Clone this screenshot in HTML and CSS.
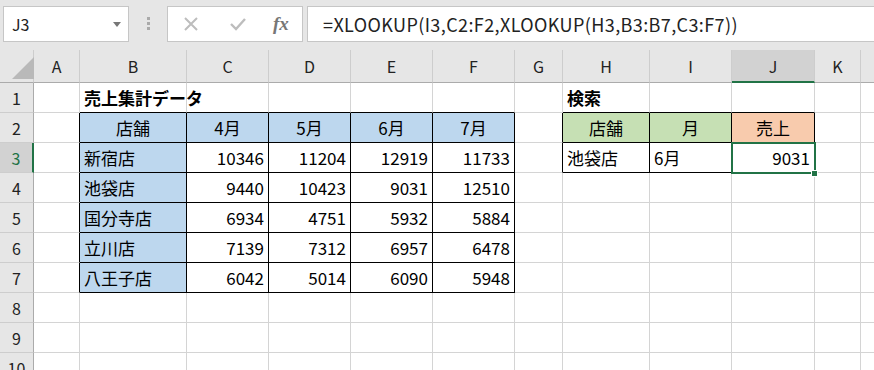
FILE: index.html
```html
<!DOCTYPE html>
<html>
<head>
 <meta charset="utf-8"/>
 <title>XLOOKUP</title>
<link rel="stylesheet" href="styles.css">
</head>
<body>

<!-- formula bar -->
<div class="bar">
 <div class="namebox">J3<span class="drop"></span></div>
 <div class="dots"><i></i><i></i><i></i></div>
 <div class="btns">
  <svg class="ico" width="16" height="16" viewBox="0 0 16 16"><path d="M2 2 L14 14 M14 2 L2 14" stroke="#bdbdbd" stroke-width="2" fill="none"/></svg>
  <svg class="ico" width="18" height="16" viewBox="0 0 18 16"><path d="M2 8 L7 13 L16 3" stroke="#bdbdbd" stroke-width="2.4" fill="none"/></svg>
  <span class="fx">fx</span>
 </div>
 <div class="formula">=XLOOKUP(I3,C2:F2,XLOOKUP(H3,B3:B7,C3:F7))</div>
</div>

<!-- sheet -->
<table class="sheet">
<colgroup>
 <col class="c-rh"><col class="c-a"><col class="c-b"><col class="c-m"><col class="c-m"><col class="c-m"><col class="c-m">
 <col class="c-g"><col class="c-h"><col class="c-m"><col class="c-j"><col class="c-k"><col class="c-l">
</colgroup>
<tr class="hdr">
 <th class="corner"><svg width="24" height="24" viewBox="0 0 24 24"><polygon points="23,1 23,23 1,23" fill="#b9b9b9"/></svg></th>
 <th>A</th><th>B</th><th>C</th><th>D</th><th>E</th><th>F</th><th>G</th><th>H</th><th>I</th><th class="sel">J</th><th>K</th><th></th>
</tr>
<tr>
 <th class="rh">1</th><td></td>
 <td class="bt title">売上集計データ</td><td class="bt"></td><td class="bt"></td><td class="bt"></td><td class="bt"></td>
 <td></td>
 <td class="bt title">検索</td><td class="bt"></td><td class="bt"></td><td></td><td></td>
</tr>
<tr>
 <th class="rh">2</th><td class="bl"></td>
 <td class="b blue ctr">店舗</td><td class="b blue ctr">4月</td><td class="b blue ctr">5月</td><td class="b blue ctr">6月</td><td class="b blue ctr">7月</td>
 <td class="bl"></td>
 <td class="b green ctr">店舗</td><td class="b green ctr">月</td><td class="b orange ctr">売上</td><td></td><td></td>
</tr>
<tr>
 <th class="rh on">3</th><td class="bl"></td>
 <td class="b blue">新宿店</td><td class="b num">10346</td><td class="b num">11204</td><td class="b num">12919</td><td class="b num">11733</td>
 <td class="bl"></td>
 <td class="b">池袋店</td><td class="b">6月</td><td class="b num cur">9031</td><td></td><td></td>
</tr>
<tr>
 <th class="rh">4</th><td class="bl"></td>
 <td class="b blue">池袋店</td><td class="b num">9440</td><td class="b num">10423</td><td class="b num">9031</td><td class="b num">12510</td>
 <td></td><td></td><td></td><td></td><td></td><td></td>
</tr>
<tr>
 <th class="rh">5</th><td class="bl"></td>
 <td class="b blue">国分寺店</td><td class="b num">6934</td><td class="b num">4751</td><td class="b num">5932</td><td class="b num">5884</td>
 <td></td><td></td><td></td><td></td><td></td><td></td>
</tr>
<tr>
 <th class="rh">6</th><td class="bl"></td>
 <td class="b blue">立川店</td><td class="b num">7139</td><td class="b num">7312</td><td class="b num">6957</td><td class="b num">6478</td>
 <td></td><td></td><td></td><td></td><td></td><td></td>
</tr>
<tr>
 <th class="rh">7</th><td class="bl"></td>
 <td class="b blue">八王子店</td><td class="b num">6042</td><td class="b num">5014</td><td class="b num">6090</td><td class="b num">5948</td>
 <td></td><td></td><td></td><td></td><td></td><td></td>
</tr>
<tr><th class="rh">8</th><td></td><td></td><td></td><td></td><td></td><td></td><td></td><td></td><td></td><td></td><td></td><td></td></tr>
<tr><th class="rh">9</th><td></td><td></td><td></td><td></td><td></td><td></td><td></td><td></td><td></td><td></td><td></td><td></td></tr>
<tr><th class="rh">10</th><td></td><td></td><td></td><td></td><td></td><td></td><td></td><td></td><td></td><td></td><td></td><td></td></tr>
</table>

</body>
</html>
```

FILE: styles.css
```css
body {
 margin: 0;
 overflow: hidden;
 background: #e6e6e6;
 font-family: "Noto Sans CJK JP", sans-serif;
 color: #000;
}

/* formula bar */
.bar {
 display: flex;
 align-items: flex-start;
 height: 50px;
 padding: 6px 0 0 3px;
 box-sizing: border-box;
}
.namebox {
 position: relative;
 width: 126px;
 height: 36px;
 box-sizing: border-box;
 background: #fff;
 border: 1px solid #c6c6c6;
 padding-left: 8px;
 font-size: 16px;
 line-height: 34px;
 color: #222;
}
.drop {
 position: absolute;
 right: 7px;
 top: 15px;
 border-left: 4px solid transparent;
 border-right: 4px solid transparent;
 border-top: 5px solid #777;
}
.dots {
 width: 38px;
 display: flex;
 flex-direction: column;
 align-items: center;
 gap: 2px;
 padding-top: 11px;
}
.dots i {
 width: 3px;
 height: 3px;
 background: #aaa;
}
.btns {
 width: 136px;
 height: 36px;
 box-sizing: border-box;
 background: #fff;
 border: 1px solid #c6c6c6;
 display: flex;
 align-items: center;
 padding-left: 15px;
 gap: 30px;
}
.fx {
 font-family: "Liberation Serif", serif;
 font-style: italic;
 font-weight: bold;
 font-size: 19px;
 color: #777;
 margin-left: -4px;
}
.formula {
 flex: 1;
 height: 36px;
 box-sizing: border-box;
 margin-left: 4px;
 margin-right: -10px;
 background: #fff;
 border: 1px solid #c6c6c6;
 padding-left: 15px;
 font-size: 18px;
 letter-spacing: 0.4px;
 line-height: 34px;
 color: #222;
 white-space: nowrap;
}

/* sheet */
.sheet {
 table-layout: fixed;
 border-collapse: separate;
 border-spacing: 0;
 width: 921px;
 background: #fff;
}
.c-rh { width: 34px; }
.c-a { width: 46px; }
.c-b { width: 107px; }
.c-m { width: 82px; }
.c-g { width: 48px; }
.c-h { width: 87px; }
.c-j { width: 83px; }
.c-k { width: 46px; }
.c-l { width: 60px; }

.sheet th, .sheet td {
 box-sizing: border-box;
 padding: 0 4px;
 border-right: 1px solid #d4d4d4;
 border-bottom: 1px solid #d4d4d4;
 font-size: 17px;
 font-weight: normal;
 white-space: nowrap;
 overflow: visible;
 height: 30px;
 line-height: 28px;
}
.hdr th {
 height: 33px;
 background: #e6e6e6;
 border-right: 1px solid #cdcdcd;
 border-bottom: 1px solid #ababab;
 font-size: 16px;
 color: #222;
 line-height: 30px;
}
.hdr th.sel {
 background: #d2d2d2;
 border-bottom: 2px solid #217346;
}
.corner {
 padding: 0;
 vertical-align: bottom;
 text-align: left;
}
.corner svg { display: block; margin: 0 0 2px 7px; }
.sheet th.rh {
 padding: 0;
 background: #e6e6e6;
 border-right: 1px solid #ababab;
 border-bottom: 1px solid #cdcdcd;
 font-size: 16px;
 color: #222;
}
.sheet th.on {
 background: #d2d2d2;
 color: #217346;
 border-right: 2px solid #217346;
}

.sheet td.title { font-weight: bold; }
.ctr { text-align: center; }
.num { text-align: right; padding-right: 3px; }
.sheet td.b { border-right-color: #000; border-bottom-color: #000; }
.sheet td.bl { border-right-color: #000; }
.sheet td.bt { border-bottom-color: #000; }
.blue { background: #bdd7ee; }
.green { background: #c6e0b4; }
.orange { background: #f8cbad; }

/* active cell */
.cur { position: relative; }
.cur::after {
 content: "";
 position: absolute;
 top: -1px;
 left: -1px;
 right: -2px;
 bottom: -2px;
 border: 2px solid #217346;
}
.cur::before {
 content: "";
 position: absolute;
 right: -4px;
 bottom: -5px;
 width: 5px;
 height: 5px;
 background: #217346;
 border: 1px solid #fff;
 z-index: 1;
}
```
